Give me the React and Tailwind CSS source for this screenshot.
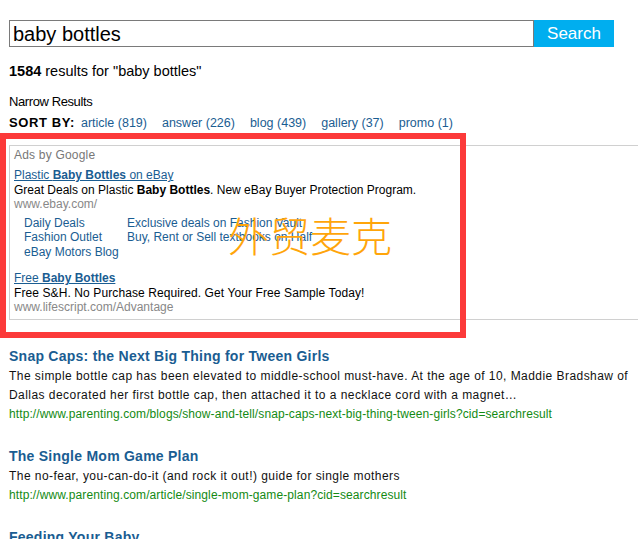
import React from "react";

const font = { fontFamily: '"Liberation Sans", Arial, "Noto Sans CJK SC", sans-serif' };

function SortLink({ children }) {
  return <a className="text-[#1a5d92] mr-[15px]">{children}</a>;
}

function Result({ title, lines, url }) {
  return (
    <div className="mb-[23px]">
      <div className="text-[14px] font-bold text-[#1a5d92] tracking-[0.25px] leading-[20px]">{title}</div>
      <div className="text-[12px] leading-[19px] tracking-[0.45px] text-[#111] mt-[1px]">
        {lines.map((l, i) => (
          <div key={i}>{l}</div>
        ))}
      </div>
      <div className="text-[12px] leading-[18px] text-[#138a13] tracking-[0.1px]">{url}</div>
    </div>
  );
}

export default function App() {
  return (
    <div className="relative w-[638px] h-[539px] overflow-hidden bg-white text-black" style={font}>
      <div className="pl-[9px] pt-[20px]">
        {/* search bar */}
        <div className="flex">
          <div className="w-[525px] h-[27px] border border-[#7a7a7a] flex items-center px-[3px] text-[20px]">
            baby bottles
          </div>
          <button className="w-[80px] h-[27px] bg-[#00aeef] text-white text-[17px]">Search</button>
        </div>

        <div className="mt-[14px] text-[14.5px] leading-[20px]">
          <span className="font-bold">1584</span> results for "baby bottles"
        </div>

        <div className="mt-[13px] text-[13px] leading-[16px] tracking-[-0.4px]">Narrow Results</div>
        <div className="mt-[5px] text-[12.5px] leading-[16px] flex items-baseline">
          <span className="font-bold text-[13px] tracking-[0.6px] mr-[6px]">SORT BY:</span>
          <SortLink>article (819)</SortLink>
          <SortLink>answer (226)</SortLink>
          <SortLink>blog (439)</SortLink>
          <SortLink>gallery (37)</SortLink>
          <SortLink>promo (1)</SortLink>
        </div>

        {/* ads */}
        <div className="mt-[14px] w-[640px] border border-[#d0d0d0] pl-[4px] pt-[1px] pb-[6px] h-[175px] text-[12px] leading-[14.5px]">
          <div className="text-[#777] tracking-[0.2px] leading-[16px]">Ads by Google</div>
          <div className="mt-[5px]">
            <a className="text-[#1a5d92] underline">
              Plastic <b>Baby Bottles</b> on eBay
            </a>
          </div>
          <div>
            Great Deals on Plastic <b>Baby Bottles</b>. New eBay Buyer Protection Program.
          </div>
          <div className="text-[#888]">www.ebay.com/</div>
          <div className="flex pl-[10px] mt-[4px] text-[#1a5d92]">
            <div className="w-[103px]">
              <div>Daily Deals</div>
              <div>Fashion Outlet</div>
              <div>eBay Motors Blog</div>
            </div>
            <div>
              <div>Exclusive deals on Fashion Vault</div>
              <div>Buy, Rent or Sell textbooks on Half</div>
            </div>
          </div>
          <div className="mt-[12px]">
            <a className="text-[#1a5d92] underline">
              Free <b>Baby Bottles</b>
            </a>
          </div>
          <div className="tracking-[0.1px]">Free S&amp;H. No Purchase Required. Get Your Free Sample Today!</div>
          <div className="text-[#888]">www.lifescript.com/Advantage</div>
        </div>

        <div className="mt-[26px]">
          <Result
            title="Snap Caps: the Next Big Thing for Tween Girls"
            lines={[
              "The simple bottle cap has been elevated to middle-school must-have. At the age of 10, Maddie Bradshaw of",
              "Dallas decorated her first bottle cap, then attached it to a necklace cord with a magnet…",
            ]}
            url="http://www.parenting.com/blogs/show-and-tell/snap-caps-next-big-thing-tween-girls?cid=searchresult"
          />
          <Result
            title="The Single Mom Game Plan"
            lines={["The no-fear, you-can-do-it (and rock it out!) guide for single mothers"]}
            url="http://www.parenting.com/article/single-mom-game-plan?cid=searchresult"
          />
          <Result title="Feeding Your Baby" lines={[]} url="" />
        </div>
      </div>

      {/* annotation overlay */}
      <div className="absolute left-0 top-[133px] w-[466px] h-[205px] border-[6px] border-[#fc3a3a] pointer-events-none" />
      <div
        className="absolute left-[228px] top-[211px] text-[41px] leading-[47px] text-[#ffa50a] pointer-events-none"
        style={{ fontFamily: '"Noto Sans CJK SC", sans-serif', fontWeight: 300 }}
      >
        外贸麦克
      </div>
    </div>
  );
}
